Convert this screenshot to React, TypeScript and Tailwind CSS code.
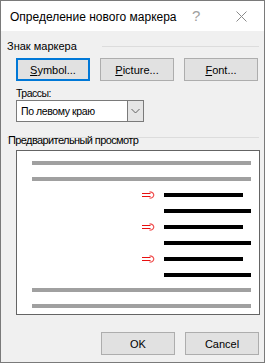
const Arrow = () => (
  <svg width="13" height="8" viewBox="0 0 13 8" className="block">
    <path d="M0 2.5H8.5M0 5.5H8.5" stroke="#e81010" strokeWidth="1.2" />
    <path d="M7.5 0.8Q11.5 1 11.8 4Q11.5 7 7.5 7.2" stroke="#f05050" strokeWidth="1.2" fill="none" />
  </svg>
);

const Bar = ({ gray }: { gray?: boolean }) => (
  <div className="flex h-4 items-center">
    <div className={gray ? "h-1 w-[219px] bg-[#a0a0a0]" : "ml-[132px] h-1 w-[87px] bg-black"} />
  </div>
);

const Btn = ({ children, focus }: { children: React.ReactNode; focus?: boolean }) => (
  <button
    className={
      focus
        ? "flex h-[23px] w-[74px] items-center justify-center border-2 border-[#0078d7] bg-[#e1e1e1] text-[11px] text-black"
        : "flex h-[23px] w-[74px] items-center justify-center border border-[#adadad] bg-[#e1e1e1] text-[11px] text-black"
    }
  >
    {children}
  </button>
);

export default function App() {
  return (
    <div
      className="flex h-[363px] w-[265px] flex-col border border-[#7a7a7a] bg-[#f0f0f0] text-[11px] leading-[14px] text-black"
      style={{ fontFamily: '"Liberation Sans", "Noto Sans", sans-serif' }}
    >
      <div className="flex h-[30px] items-center bg-white pl-[9px]">
        <span className="flex-1 pt-[1px] text-[12px]">Определение нового маркера</span>
        <span className="w-[20px] text-[15px] font-light text-[#a0a0a0]">?</span>
        <svg width="11" height="11" viewBox="0 0 11 11" className="mr-[17px] ml-[24px]">
          <path d="M0.5 0.5L10.5 10.5M10.5 0.5L0.5 10.5" stroke="#8a8a8a" strokeWidth="1" />
        </svg>
      </div>

      <div className="mt-[8px] flex h-[14px] items-center pl-[6px] pr-[5px]">
        <span>Знак маркера</span>
        <div className="ml-[25px] h-px flex-1 bg-[#dcdcdc]" />
      </div>

      <div className="mt-[5px] flex gap-[10px] pl-[15px]">
        <Btn focus>
          <span>
            <u>S</u>ymbol...
          </span>
        </Btn>
        <Btn>
          <span>
            <u>P</u>icture...
          </span>
        </Btn>
        <Btn>
          <span>
            <u>F</u>ont...
          </span>
        </Btn>
      </div>

      <div className="mt-[5px] pl-[15px] text-[10.5px] tracking-[-0.5px]">Трассы:</div>
      <div className="ml-[15px] flex h-[22px] w-[128px] border border-[#7a7a7a] bg-white">
        <span className="flex flex-1 items-center pl-[4px] text-[10.5px] tracking-[-0.4px]">По левому краю</span>
        <div className="flex w-[16px] items-center justify-center border-l border-[#7a7a7a] bg-[#e5e5e5]">
          <svg width="9" height="6" viewBox="0 0 9 6">
            <path d="M0.5 1L4.5 5L8.5 1" stroke="#606060" strokeWidth="1" fill="none" />
          </svg>
        </div>
      </div>

      <div className="relative mt-[15px] pl-[6px] pr-[5px]">
        <div className="h-px bg-[#dcdcdc]" />
        <span className="absolute top-[-4px] left-[7px] tracking-[-0.6px]">Предварительный просмотр</span>
      </div>

      <div className="mt-[12px] ml-[15px] flex h-[165px] w-[244px] flex-col border border-[#646464] bg-white pt-[4px] pl-[15px]">
        <Bar gray />
        <Bar gray />
        {[0, 1, 2].map((i) => (
          <div key={i}>
            <div className="flex h-4 items-center">
              <div className="ml-[110px] w-[22px]">
                <Arrow />
              </div>
              <div className="h-1 w-[79px] bg-black" />
            </div>
            <Bar />
          </div>
        ))}
        <Bar gray />
        <Bar gray />
      </div>

      <div className="mt-[17px] flex justify-end gap-[10px] pr-[5px]">
        <Btn>OK</Btn>
        <Btn>Cancel</Btn>
      </div>
    </div>
  );
}
